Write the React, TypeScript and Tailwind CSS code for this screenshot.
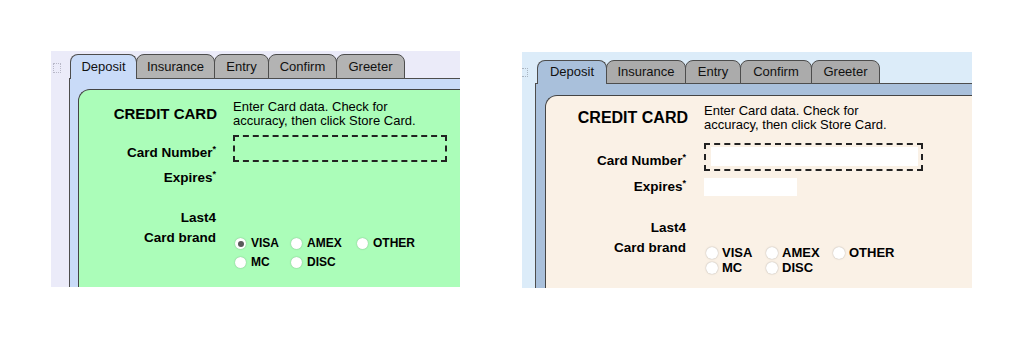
import React from 'react';

type Variant = {
  panel: string;
  gutter: string;
  square: string;
  tabsRow: string;
  activeTab: string;
  tab: string;
  tabWidths: string[];
  body: string;
  inner: string;
  labelCol: string;
  ctrlGap: string;
  header: string;
  title: string;
  cardRow: string;
  cardLabel: string;
  cardBox: string;
  cardField: string;
  expRow: string;
  expField: string;
  lastRow: string;
  brandRow: string;
  radios: string;
  radioText: string;
  radio: string;
  checkedFirst: boolean;
};

const tabs = ['Deposit', 'Insurance', 'Entry', 'Confirm', 'Greeter'];
const brands = ['VISA', 'AMEX', 'OTHER', 'MC', 'DISC'];

const green: Variant = {
  panel: 'w-[409px] h-[236px] bg-[#ebebf9] pt-[3px]',
  gutter: 'w-[18px]',
  square: 'ml-[2px] mt-[9px] w-[8px] h-[10px] border border-dotted border-[#b8b8c8]',
  tabsRow: 'pl-px',
  activeTab: 'h-[25px] bg-[#c9dbf8]',
  tab: 'h-[25px] bg-[#b3b3b3]',
  tabWidths: ['w-[67px]', 'w-[79px]', 'w-[55px]', 'w-[69px]', 'w-[69px]'],
  body: 'bg-[#c9dbf8] pt-[10px] pl-[8px]',
  inner: 'bg-[#abfdb9] rounded-tl-[12px]',
  labelCol: 'w-[137px]',
  ctrlGap: 'ml-[17px]',
  header: 'mt-[10px]',
  title: 'text-[15px] translate-x-px',
  cardRow: 'mt-[7px]',
  cardLabel: 'mb-px',
  cardBox: 'w-[214px] h-[27px]',
  cardField: '',
  expRow: 'mt-[7px] h-[18px]',
  expField: 'w-[93px] h-[18px]',
  lastRow: 'mt-[23px]',
  brandRow: 'mt-[4px]',
  radios: 'pt-[4px] grid-cols-[56px_66px_auto] leading-[19px] text-[12px]',
  radioText: 'ml-[5px]',
  radio: 'w-[11px] h-[11px]',
  checkedFirst: true,
};

const beige: Variant = {
  panel: 'w-[450px] h-[236px] bg-[#dcecf9] pt-[8px]',
  gutter: 'w-[13px]',
  square: 'mt-[8px] w-[6px] h-[9px] border-y border-r border-dotted border-[#a9b4c0]',
  tabsRow: 'pl-[2px]',
  activeTab: 'h-[24px] bg-[#a9c0db]',
  tab: 'h-[24px] bg-[#ababab]',
  tabWidths: ['w-[70px]', 'w-[80px]', 'w-[56px]', 'w-[72px]', 'w-[69px]'],
  body: 'bg-[#a9c0db] pt-[11px] pl-[9px]',
  inner: 'bg-[#faf1e6] rounded-tl-[12px]',
  labelCol: 'w-[140px]',
  ctrlGap: 'ml-[18px]',
  header: 'mt-[8px]',
  title: 'text-[16px] translate-x-[2px]',
  cardRow: 'mt-[11px]',
  cardLabel: 'mb-[2px]',
  cardBox: 'w-[219px] h-[28px] pt-[2px] pb-[3px] pl-[5px] pr-[3px]',
  cardField: 'bg-white h-full',
  expRow: 'mt-[7px] h-[18px]',
  expField: 'w-[93px] h-[18px] bg-white',
  lastRow: 'mt-[24px]',
  brandRow: 'mt-[4px]',
  radios: 'pt-[5px] grid-cols-[60px_67px_auto] leading-[15px] text-[13px]',
  radioText: 'ml-[4px]',
  radio: 'w-[12px] h-[12px]',
  checkedFirst: false,
};

function Radio({ v, checked }: { v: Variant; checked: boolean }) {
  return (
    <span
      className={`${v.radio} ml-[2px] rounded-full bg-white shadow-[0_0_1.5px_rgba(0,0,0,0.35)] flex items-center justify-center flex-shrink-0`}
    >
      {checked && <span className="w-[6px] h-[6px] rounded-full bg-[#5a5a5a]" />}
    </span>
  );
}

function Star() {
  return <span className="text-[9px] align-top leading-none">*</span>;
}

function CardForm({ v }: { v: Variant }) {
  const label = `${v.labelCol} flex-shrink-0 text-right font-bold text-[13.5px] leading-[16px]`;
  return (
    <div className="flex flex-col text-black">
      <div className={`flex ${v.header}`}>
        <div className={`${v.labelCol} flex-shrink-0 self-center text-right font-bold whitespace-nowrap ${v.title}`}>
          CREDIT CARD
        </div>
        <div className={`${v.ctrlGap} text-[13px] leading-[14px]`}>
          Enter Card data. Check for
          <br />
          accuracy, then click Store Card.
        </div>
      </div>

      <div className={`flex ${v.cardRow}`}>
        <div className={`${label} self-end ${v.cardLabel}`}>
          Card Number<Star />
        </div>
        <div className={`${v.ctrlGap} ${v.cardBox} border-2 border-dashed border-[#222]`}>
          <div className={v.cardField} />
        </div>
      </div>

      <div className={`flex items-center ${v.expRow}`}>
        <div className={label}>
          Expires<Star />
        </div>
        <div className={`${v.ctrlGap} ${v.expField}`} />
      </div>

      <div className={`flex ${v.lastRow}`}>
        <div className={label}>Last4</div>
      </div>

      <div className={`flex ${v.brandRow}`}>
        <div className={label}>Card brand</div>
        <div className={`${v.ctrlGap} ${v.radios} grid font-bold`}>
          {brands.map((b, i) => (
            <div key={b} className="flex items-center">
              <Radio v={v} checked={v.checkedFirst && i === 0} />
              <span className={v.radioText}>{b}</span>
            </div>
          ))}
        </div>
      </div>
    </div>
  );
}

function Panel({ v }: { v: Variant }) {
  return (
    <div className={`${v.panel} flex overflow-hidden flex-shrink-0`}>
      <div className={`${v.gutter} flex-shrink-0`}>
        <div className={v.square} />
      </div>
      <div className="flex flex-col flex-1 min-w-0">
        <div className={`flex items-end relative z-10 -mb-px ${v.tabsRow}`}>
          {tabs.map((t, i) => (
            <div
              key={t}
              className={`${v.tabWidths[i]} ${i === 0 ? v.activeTab + ' border-b-0' : v.tab} ${
                i > 0 ? '-ml-px' : ''
              } flex-shrink-0 border border-[#4d4d4d] rounded-t-[8px] flex items-center justify-center text-[13px] text-[#111]`}
            >
              <span className={i === 0 ? 'pb-px' : ''}>{t}</span>
            </div>
          ))}
        </div>
        <div className={`${v.body} flex-1 flex flex-col border-t border-l border-[#4d4d4d]`}>
          <div className={`${v.inner} flex-1 border-t border-l border-[#444]`}>
            <CardForm v={v} />
          </div>
        </div>
      </div>
    </div>
  );
}

export default function App() {
  return (
    <div className="w-[1024px] h-[340px] bg-white font-['Liberation_Sans',Arial,sans-serif] flex items-start pl-[51px] pt-[51px] gap-[62px]">
      <Panel v={green} />
      <div className="mt-px">
        <Panel v={beige} />
      </div>
    </div>
  );
}
